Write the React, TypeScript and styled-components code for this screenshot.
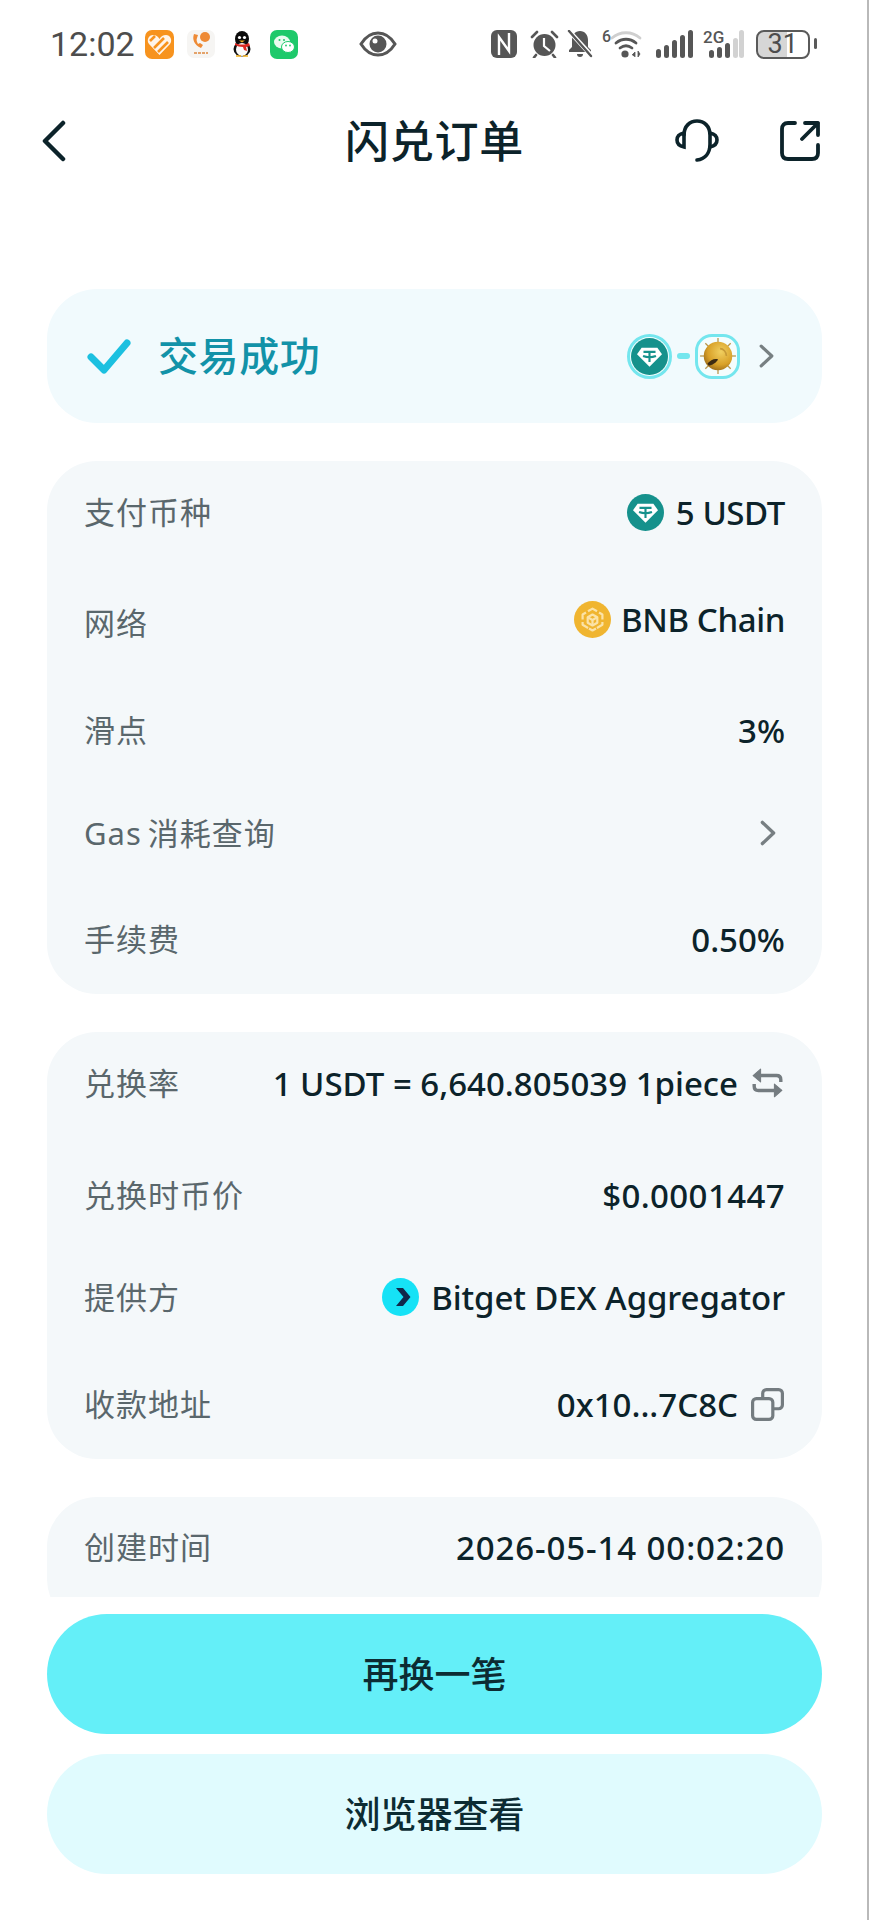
import styled, { createGlobalStyle } from "styled-components";
import type { ReactNode } from "react";

const GlobalStyle = createGlobalStyle`
  html, body {
    margin: 0;
    padding: 0;
    background: #fff;
  }
  * {
    box-sizing: border-box;
  }
`;

const FONT = `"Noto Sans", "Noto Sans CJK SC", sans-serif`;
const INK = "#0c232a";

const Screen = styled.div`
  width: 869px;
  height: 1920px;
  display: flex;
  flex-direction: column;
  overflow: hidden;
  background: #fff;
  box-shadow: inset -2px 0 0 #b9b9b9;
  font-family: ${FONT};
  color: ${INK};
`;

const StatusBar = styled.div`
  height: 88px;
  flex: none;
  display: flex;
  align-items: center;
  padding: 0 0 0 50px;
`;

const Clock = styled.span`
  font-family: Roboto, sans-serif;
  font-size: 34px;
  line-height: 1;
  color: #4d4d4d;
  margin-right: 10px;
`;

const Slot = styled.span<{ $left?: number }>`
  display: inline-flex;
  flex: none;
  margin-left: ${({ $left }) => $left ?? 0}px;
`;

const Battery = styled.span`
  position: relative;
  flex: none;
  width: 54px;
  height: 29px;
  margin-left: 12px;
  border: 2.5px solid #5a5a5a;
  border-radius: 8px;
  background: linear-gradient(90deg, #d6d6d6 0 58%, #fff 58%);
  display: flex;
  align-items: center;
  justify-content: center;
  font-family: Roboto, sans-serif;
  font-size: 27px;
  line-height: 1;
  color: #4d4d4d;

  &::after {
    content: "";
    position: absolute;
    right: -9px;
    top: 6px;
    width: 3px;
    height: 11px;
    border-radius: 2px;
    background: #5a5a5a;
  }
`;

const Header = styled.header`
  height: 106px;
  flex: none;
  display: grid;
  grid-template-columns: 1fr auto 1fr;
  align-items: center;
  padding: 0 41px;
`;

const Title = styled.h1`
  margin: 0;
  font-size: 44px;
  font-weight: 500;
  line-height: 1;
  letter-spacing: 0.8px;
`;

const HeaderActions = styled.div`
  display: flex;
  justify-content: flex-end;
  align-items: center;
  gap: 61px;
  padding-right: 8px;
`;

const Scroller = styled.main`
  flex: 1;
  min-height: 0;
  overflow: hidden;
  padding: 95px 47px 0;
  display: flex;
  flex-direction: column;
  gap: 38px;
`;

const StateCard = styled.section`
  height: 134px;
  flex: none;
  display: flex;
  align-items: center;
  padding: 0 47px 0 40px;
  border-radius: 50px;
  background: #f1fafd;
`;

const StateLabel = styled.span`
  margin-left: 27px;
  font-size: 40px;
  font-weight: 500;
  line-height: 1;
  letter-spacing: 0.6px;
  color: #1292a8;
`;

const TokenPair = styled.div`
  margin-left: auto;
  display: flex;
  align-items: center;
`;

const Ring = styled.span<{ $square?: boolean }>`
  width: 45px;
  height: 45px;
  display: flex;
  align-items: center;
  justify-content: center;
  border: 3.5px solid #74e6ee;
  border-radius: ${({ $square }) => ($square ? "17px" : "50%")};
  background: #f4fdfd;
`;

const Dash = styled.span`
  width: 13px;
  height: 6px;
  margin: 0 5px;
  border-radius: 3px;
  background: #74e6ee;
`;

const PairArrow = styled.span`
  display: inline-flex;
  margin-left: 18px;
`;

const GasArrow = styled.span`
  display: inline-flex;
  margin-right: 8px;
`;

const Card = styled.section<{ $top?: number; $bottom?: number }>`
  flex: none;
  padding: ${({ $top }) => $top ?? 29}px 37px ${({ $bottom }) => $bottom ?? 33}px;
  border-radius: 50px;
  background: #f4f8fa;
`;

const Row = styled.div<{ $gap?: number }>`
  height: 44px;
  margin-top: ${({ $gap }) => $gap ?? 0}px;
  display: flex;
  align-items: center;
  justify-content: space-between;
`;

const Label = styled.span`
  font-size: 31px;
  line-height: 1;
  letter-spacing: 1px;
  word-spacing: -3px;
  color: #5a676c;
`;

const Value = styled.span<{ $track?: number; $lift?: number }>`
  display: flex;
  align-items: center;
  margin-bottom: ${({ $lift }) => $lift ?? 0}px;
  font-size: 33px;
  font-weight: 500;
  line-height: 1;
  letter-spacing: ${({ $track }) => $track ?? 0}px;
  white-space: nowrap;
  color: ${INK};
`;

const LeadIcon = styled.span<{ $tight?: boolean }>`
  display: inline-flex;
  flex: none;
  margin-right: ${({ $tight }) => ($tight ? 10 : 12)}px;
`;

const TrailIcon = styled.span`
  display: inline-flex;
  flex: none;
  margin: 0 1px 0 13px;
`;

const Footer = styled.footer`
  flex: none;
  padding: 17px 47px 46px;
  display: flex;
  flex-direction: column;
  gap: 20px;
`;

const ActionButton = styled.button<{ $primary?: boolean }>`
  height: 120px;
  border: 0;
  padding: 0 0 4px;
  border-radius: 60px;
  font-family: ${FONT};
  font-size: 36px;
  font-weight: 500;
  color: #0c2c33;
  background: ${({ $primary }) => ($primary ? "#64eff8" : "#e0fbfe")};
`;

function Tether({ size }: { size: number }) {
  return (
    <svg width={size} height={size} viewBox="0 0 40 40">
      <circle cx="20" cy="20" r="20" fill="#15918c" />
      <path d="M11.5 10.5h17l5 7L20 31 6.500 17.500z" fill="#fff" />
      <path
        d="M13.500 15h13M20 15v11M13 19.500c4 1.500 10 1.500 14 0"
        stroke="#15918c"
        strokeWidth="2.300"
        fill="none"
      />
    </svg>
  );
}

function SpikyCoin() {
  const spikes = [0, 45, 90, 135, 180, 225, 270, 315];
  return (
    <svg width="38" height="38" viewBox="0 0 36 36">
      <defs>
        <radialGradient id="coinGold" cx="0.6" cy="0.35" r="0.7">
          <stop offset="0" stopColor="#f0cf60" />
          <stop offset="0.65" stopColor="#d9a128" />
          <stop offset="1" stopColor="#9c6c18" />
        </radialGradient>
      </defs>
      {spikes.map((deg) => (
        <line
          key={deg}
          x1="18"
          y1="1"
          x2="18"
          y2="6"
          stroke="#b8954a"
          strokeWidth="1.200"
          transform={`rotate(${deg} 18 18)`}
        />
      ))}
      <circle cx="18" cy="18" r="13.500" fill="url(#coinGold)" />
      <path d="M8 25c3-3 6-5 10-4-1 3-6 6-9 6z" fill="#3d2b12" />
      <path d="M20 11c3 0 6 3 6 7" fill="none" stroke="#c79a36" strokeWidth="1.500" />
    </svg>
  );
}

function BnbBadge() {
  return (
    <svg width="37" height="37" viewBox="0 0 37 37">
      <circle cx="18.500" cy="18.500" r="18.500" fill="#f0b530" />
      <g fill="none" stroke="#fbe3a8" strokeWidth="2.200" strokeLinejoin="round">
        <path d="M14 10.200l4.500-2.600 4.500 2.600" />
        <path d="M12 11.500l-3.400 2v5M25 11.500l3.400 2v5" />
        <path d="M8.600 21v2.800l5.500 3.200M28.400 21v2.800l-5.500 3.200" />
        <path d="M15 27.500l3.500 2 3.500-2" />
        <path d="M18.500 13.500l4.800 2.800v5.400l-4.800 2.800-4.800-2.800v-5.400z" />
        <path d="M18.500 19v5.600M18.500 19l-4.800-2.800M18.500 19l4.800-2.800" />
      </g>
    </svg>
  );
}

function BitgetBadge() {
  return (
    <svg width="37" height="38" viewBox="0 0 37 38">
      <ellipse cx="18.500" cy="19" rx="18.500" ry="19" fill="#16e2f6" />
      <path d="M14 10h7l7.500 9-7.500 9h-7l7.500-9z" fill="#10284a" />
    </svg>
  );
}

function Chevron({ w, h, color, sw }: { w: number; h: number; color: string; sw: number }) {
  return (
    <svg width={w} height={h} viewBox={`0 0 ${w} ${h}`}>
      <path
        d={`M${sw} ${sw}L${w - sw} ${h / 2}L${sw} ${h - sw}`}
        fill="none"
        stroke={color}
        strokeWidth={sw}
        strokeLinecap="round"
        strokeLinejoin="round"
      />
    </svg>
  );
}

function BackArrow() {
  return (
    <svg width="26" height="42" viewBox="0 0 26 42">
      <path
        d="M22 3L4 21l18 18"
        fill="none"
        stroke={INK}
        strokeWidth="4.500"
        strokeLinecap="round"
        strokeLinejoin="round"
      />
    </svg>
  );
}

function Headset() {
  return (
    <svg width="44" height="44" viewBox="0 0 44 44" fill="none" stroke={INK} strokeWidth="3.600" strokeLinecap="round">
      <path d="M9 16C9 7 15 2 22 2s13 5 13 14v9c0 9-5 15-13 16" />
      <path d="M9 14C4 15 2 18 2 21s2 6 7 7z" />
      <path d="M35 14c5 1 7 4 7 7s-2 6-7 7" />
    </svg>
  );
}

function ShareOut() {
  return (
    <svg width="40" height="40" viewBox="0 0 40 40" fill="none" stroke={INK} strokeWidth="3.800" strokeLinecap="round" strokeLinejoin="round">
      <path d="M15 2H8C4 2 2 4 2 8v24c0 4 2 6 6 6h24c4 0 6-2 6-6v-8" />
      <path d="M22 18L38 2M25 2h13v12" />
    </svg>
  );
}

function SwapIcon() {
  return (
    <svg width="33" height="30" viewBox="0 0 31 28" fill="none" stroke="#747c80" strokeWidth="3.200" strokeLinejoin="round">
      <path d="M9 7h15c3 0 4 1.500 4 4v2M22 21H7c-3 0-4-1.500-4-4v-2" />
      <path d="M9 1v12L2 7z" fill="#747c80" strokeWidth="1" />
      <path d="M22 15v12l7-6z" fill="#747c80" strokeWidth="1" />
    </svg>
  );
}

function CopyIcon() {
  return (
    <svg width="33" height="33" viewBox="0 0 31 31" fill="none" stroke="#747c80" strokeWidth="3">
      <path d="M11 9V5c0-2 1.500-3.500 3.500-3.500H26c2 0 3.500 1.500 3.500 3.500v11c0 2-1.500 3.500-3.500 3.500h-5" />
      <rect x="1.500" y="10" width="19" height="19.500" rx="3.500" />
    </svg>
  );
}

function CheckMark() {
  return (
    <svg width="44" height="36" viewBox="0 0 44 36">
      <path
        d="M4 19l13 13L40 5"
        fill="none"
        stroke="#1cc0e0"
        strokeWidth="7"
        strokeLinecap="round"
        strokeLinejoin="round"
      />
    </svg>
  );
}

// status bar notification icons
function HeartApp() {
  return (
    <svg width="29" height="29" viewBox="0 0 29 29">
      <rect width="29" height="29" rx="7" fill="#f7931e" />
      <path d="M14.500 25L4 14c-3-4 0-9 4-9 3 0 5 1.500 6.500 4C16 6.500 18 5 21 5c4 0 7 5 4 9z" fill="#fff" opacity="0.9" />
      <path d="M9 18L19 8M13 22L23 12M5 11l5-5" stroke="#f7931e" strokeWidth="2.600" />
    </svg>
  );
}

function PhoneApp() {
  return (
    <svg width="28" height="28" viewBox="0 0 28 28">
      <rect width="28" height="28" rx="7" fill="#f6f5f3" />
      <path d="M7 4c-2 5 0 11 7 14l2-3-3-2-2 1c-1-2-2-4-1-6l1-3z" fill="#ee8a35" />
      <circle cx="18" cy="7" r="5" fill="#ee8a35" />
      <path d="M7 23h14" stroke="#e4a36b" strokeWidth="2" strokeDasharray="3 1" />
    </svg>
  );
}

function Penguin() {
  return (
    <svg width="22" height="26" viewBox="0 0 22 26">
      <ellipse cx="11" cy="8" rx="7" ry="8" fill="#0b0b0b" />
      <ellipse cx="11" cy="18" rx="8.500" ry="7.500" fill="#111" />
      <ellipse cx="11" cy="18.500" rx="6" ry="6.500" fill="#fbfbfb" />
      <path d="M4 12c4 2 10 2 14 0l1 3-4 1 1 4-3-1-1-3c-3 0-6-1-8-2z" fill="#dd2a22" />
      <circle cx="8.500" cy="6.500" r="1.600" fill="#fff" />
      <circle cx="13.500" cy="6.500" r="1.600" fill="#fff" />
      <path d="M8 9.500h6l-3 2z" fill="#f2b01e" />
      <path d="M5 25h5M12 25h5" stroke="#f2b01e" strokeWidth="1.500" />
    </svg>
  );
}

function WeChatApp() {
  return (
    <svg width="28" height="29" viewBox="0 0 28 29">
      <rect width="28" height="29" rx="7" fill="#1ec96b" />
      <ellipse cx="12" cy="12" rx="8" ry="6.500" fill="#e9fbf0" />
      <ellipse cx="18" cy="17" rx="6.500" ry="5.500" fill="#fff" stroke="#1ec96b" />
      <circle cx="9.500" cy="10" r="1" fill="#1ec96b" />
      <circle cx="14" cy="10" r="1" fill="#1ec96b" />
      <circle cx="16" cy="15.500" r="0.900" fill="#1ec96b" />
      <circle cx="20" cy="15.500" r="0.900" fill="#1ec96b" />
    </svg>
  );
}

function Eye() {
  return (
    <svg width="38" height="26" viewBox="0 0 38 26">
      <path d="M2 13C7 5 13 2 19 2s12 3 17 11c-5 8-11 11-17 11S7 21 2 13z" fill="none" stroke="#565656" strokeWidth="3" />
      <circle cx="19" cy="13" r="8.500" fill="#565656" />
      <circle cx="16" cy="10" r="2.500" fill="#fff" />
    </svg>
  );
}

function NfcIcon() {
  return (
    <svg width="26" height="28" viewBox="0 0 26 28">
      <rect width="26" height="28" rx="6" fill="#565656" />
      <path d="M8 25V7l10 14V3" fill="none" stroke="#fff" strokeWidth="2.400" />
    </svg>
  );
}

function AlarmIcon() {
  return (
    <svg width="29" height="28" viewBox="0 0 29 28">
      <circle cx="14.500" cy="15" r="11" fill="#565656" />
      <path d="M14 8v8l6 5" fill="none" stroke="#fff" strokeWidth="2.200" />
      <path d="M2 7l5-5M27 7l-5-5M6 25l-2 2.500M23 25l2 2.500" stroke="#565656" strokeWidth="2.600" strokeLinecap="round" />
    </svg>
  );
}

function MutedBell() {
  return (
    <svg width="26" height="28" viewBox="0 0 26 28">
      <path d="M13 1c5 0 8 4 8 9v7l3 3v2H2v-2l3-3v-7c0-5 3-9 8-9z" fill="#565656" />
      <path d="M10 24h6c0 2-1 3-3 3s-3-1-3-3z" fill="#565656" />
      <path d="M3 2l21 23" stroke="#fff" strokeWidth="4.500" />
      <path d="M2 1l22 25" stroke="#565656" strokeWidth="2.400" strokeLinecap="round" />
    </svg>
  );
}

function WifiIcon() {
  return (
    <svg width="40" height="38" viewBox="0 -4 40 38">
      <text x="0" y="13" fontFamily="Roboto, sans-serif" fontSize="16" fontWeight="500" fill="#565656">6</text>
      <g fill="none" strokeWidth="2.800" strokeLinecap="round">
        <path d="M10 9c8-7 20-7 28 0" stroke="#cfcfcf" />
        <path d="M14 14c6-5 14-5 20 0" stroke="#565656" />
        <path d="M18 19c4-3 8-3 12 0" stroke="#565656" />
      </g>
      <circle cx="23" cy="25" r="3.600" fill="#565656" />
      <path d="M30 26l3-3v5M36 22v6l2-3z" fill="#565656" stroke="#565656" strokeWidth="0.800" />
    </svg>
  );
}

function SignalBars({ bars }: { bars: number[] }) {
  const w = bars.length * 8;
  const h = Math.max(...bars);
  return (
    <svg width={w} height={h} viewBox={`0 0 ${w} ${h}`}>
      {bars.map((barH, i) => (
        <rect key={i} x={i * 8 + 1} y={h - barH} width="5" height={barH} rx="2.500" fill="#565656" />
      ))}
    </svg>
  );
}

const DUAL_BARS = [
  { x: 6, h: 8, c: "#565656" },
  { x: 14, h: 11, c: "#565656" },
  { x: 22, h: 15, c: "#565656" },
  { x: 30, h: 20, c: "#d2d2d2" },
  { x: 36, h: 28, c: "#d2d2d2" },
];

function DualSignal() {
  return (
    <svg width="41" height="38" viewBox="0 -5 41 38">
      <text x="0" y="13" fontFamily="Roboto, sans-serif" fontSize="17" fontWeight="500" fill="#565656">2G</text>
      {DUAL_BARS.map((bar) => (
        <rect key={bar.x} x={bar.x} y={28 - bar.h} width="5" height={bar.h} rx="2.500" fill={bar.c} />
      ))}
    </svg>
  );
}

function InfoRow({
  label,
  gap,
  track,
  lift,
  children,
}: {
  label: string;
  gap?: number;
  track?: number;
  lift?: number;
  children: ReactNode;
}) {
  return (
    <Row $gap={gap}>
      <Label>{label}</Label>
      <Value $track={track} $lift={lift}>
        {children}
      </Value>
    </Row>
  );
}

export default function App() {
  return (
    <>
      <GlobalStyle />
      <Screen>
        <StatusBar>
          <Clock>12:02</Clock>
          <HeartApp />
          <Slot $left={13}><PhoneApp /></Slot>
          <Slot $left={16}><Penguin /></Slot>
          <Slot $left={17}><WeChatApp /></Slot>
          <Slot $left={61}><Eye /></Slot>
          <Slot $left={94}><NfcIcon /></Slot>
          <Slot $left={13}><AlarmIcon /></Slot>
          <Slot $left={8}><MutedBell /></Slot>
          <Slot $left={9}><WifiIcon /></Slot>
          <Slot $left={13}><SignalBars bars={[9, 13, 18, 23, 28]} /></Slot>
          <Slot $left={8}><DualSignal /></Slot>
          <Battery>31</Battery>
        </StatusBar>

        <Header>
          <BackArrow />
          <Title>闪兑订单</Title>
          <HeaderActions>
            <Headset />
            <ShareOut />
          </HeaderActions>
        </Header>

        <Scroller>
          <StateCard>
            <CheckMark />
            <StateLabel>交易成功</StateLabel>
            <TokenPair>
              <Ring>
                <Tether size={37} />
              </Ring>
              <Dash />
              <Ring $square>
                <SpikyCoin />
              </Ring>
              <PairArrow>
                <Chevron w={17} h={26} color="#777f82" sw={3.2} />
              </PairArrow>
            </TokenPair>
          </StateCard>

          <Card>
            <InfoRow label="支付币种" track={-0.4}>
              <LeadIcon>
                <Tether size={37} />
              </LeadIcon>
              5 USDT
            </InfoRow>
            <InfoRow label="网络" gap={67} lift={7} track={-0.4}>
              <LeadIcon $tight>
                <BnbBadge />
              </LeadIcon>
              BNB Chain
            </InfoRow>
            <InfoRow label="滑点" gap={63}>3%</InfoRow>
            <InfoRow label="Gas 消耗查询" gap={59}>
              <GasArrow>
                <Chevron w={18} h={28} color="#777f82" sw={3.4} />
              </GasArrow>
            </InfoRow>
            <InfoRow label="手续费" gap={62}>0.50%</InfoRow>
          </Card>

          <Card>
            <InfoRow label="兑换率">
              1 USDT = 6,640.805039 1piece
              <TrailIcon>
                <SwapIcon />
              </TrailIcon>
            </InfoRow>
            <InfoRow label="兑换时币价" gap={68} track={0.4}>$0.0001447</InfoRow>
            <InfoRow label="提供方" gap={58} track={-0.1}>
              <LeadIcon>
                <BitgetBadge />
              </LeadIcon>
              Bitget DEX Aggregator
            </InfoRow>
            <InfoRow label="收款地址" gap={63}>
              0x10...7C8C
              <TrailIcon>
                <CopyIcon />
              </TrailIcon>
            </InfoRow>
          </Card>

          <Card $top={28} $bottom={60}>
            <InfoRow label="创建时间" track={0.9}>2026-05-14 00:02:20</InfoRow>
          </Card>
        </Scroller>

        <Footer>
          <ActionButton $primary>再换一笔</ActionButton>
          <ActionButton>浏览器查看</ActionButton>
        </Footer>
      </Screen>
    </>
  );
}
